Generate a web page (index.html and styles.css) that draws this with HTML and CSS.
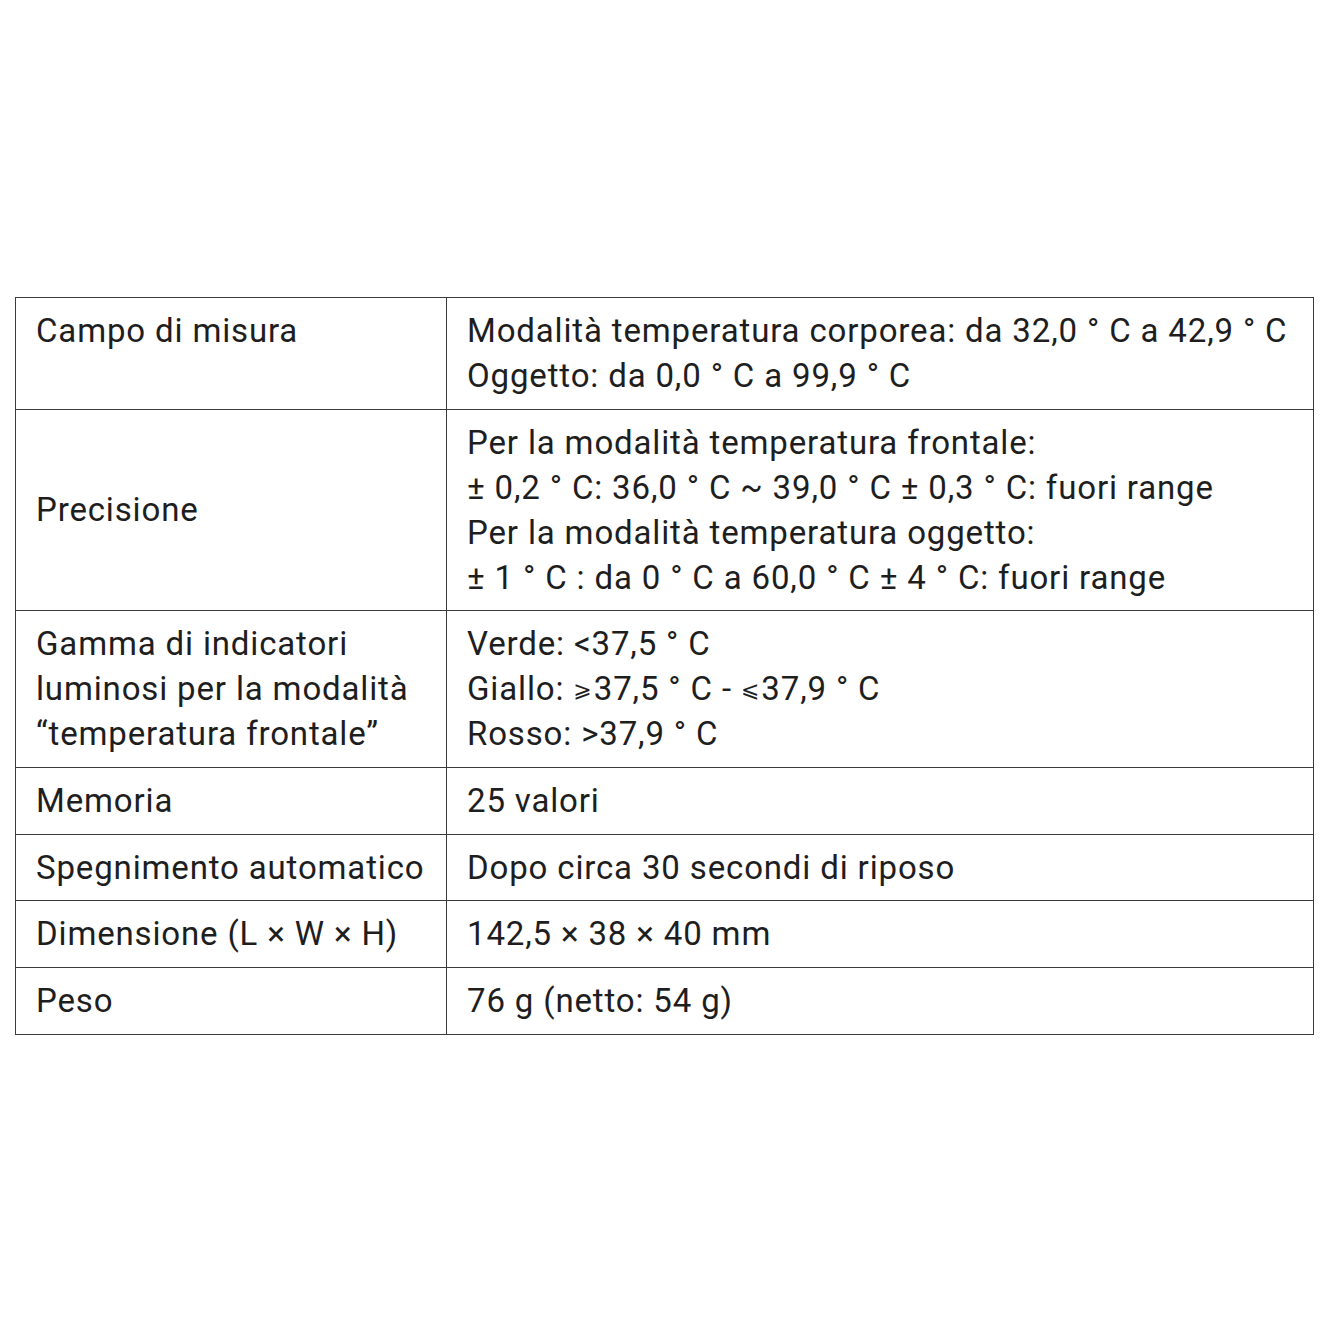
FILE: index.html
```html
<!DOCTYPE html>
<html lang="it">
<head>
<meta charset="utf-8">
<link rel="stylesheet" href="styles.css">
</head>
<body>
<div class="page">
<table class="spec">
  <tr>
    <td class="label top">Campo di misura</td>
    <td class="value">Modalità temperatura corporea: da 32,0 ° C a 42,9 ° C<br>Oggetto: da 0,0 ° C a 99,9 ° C</td>
  </tr>
  <tr>
    <td class="label">Precisione</td>
    <td class="value">Per la modalità temperatura frontale:<br>± 0,2 ° C: 36,0 ° C ~ 39,0 ° C ± 0,3 ° C: fuori range<br>Per la modalità temperatura oggetto:<br>± 1 ° C : da 0 ° C a 60,0 ° C ± 4 ° C: fuori range</td>
  </tr>
  <tr>
    <td class="label">Gamma di indicatori<br>luminosi per la modalità<br>“temperatura frontale”</td>
    <td class="value">Verde: &lt;37,5 ° C<br>Giallo: <span class="sym">⩾</span>37,5 ° C - <span class="sym">⩽</span>37,9 ° C<br>Rosso: &gt;37,9 ° C</td>
  </tr>
  <tr>
    <td class="label">Memoria</td>
    <td class="value">25 valori</td>
  </tr>
  <tr>
    <td class="label">Spegnimento automatico</td>
    <td class="value">Dopo circa 30 secondi di riposo</td>
  </tr>
  <tr>
    <td class="label">Dimensione (L × W × H)</td>
    <td class="value">142,5 × 38 × 40 mm</td>
  </tr>
  <tr>
    <td class="label">Peso</td>
    <td class="value">76 g (netto: 54 g)</td>
  </tr>
</table>
</div>
</body>
</html>
```

FILE: styles.css
```css
html, body {
  margin: 0;
  padding: 0;
  background: #ffffff;
}
.page {
  padding: 297px 0 0 15px;
}
.spec {
  border-collapse: collapse;
  width: 1299px;
  font-family: Roboto, "Liberation Sans", sans-serif;
  font-size: 33px;
  letter-spacing: 0.85px;
  line-height: 45px;
  color: #1e1e1e;
}
.spec td {
  border: 1.5px solid #3a3a3a;
  padding: 10px 20px 10.7px;
  vertical-align: middle;
  text-align: left;
}
.spec td.top {
  vertical-align: top;
}
.spec td.label {
  width: 390px;
}
.sym {
  font-family: "DejaVu Sans", sans-serif;
  font-size: 22px;
  line-height: 1;
  letter-spacing: 0;
  padding-right: 2px;
  vertical-align: 3px;
}
```
